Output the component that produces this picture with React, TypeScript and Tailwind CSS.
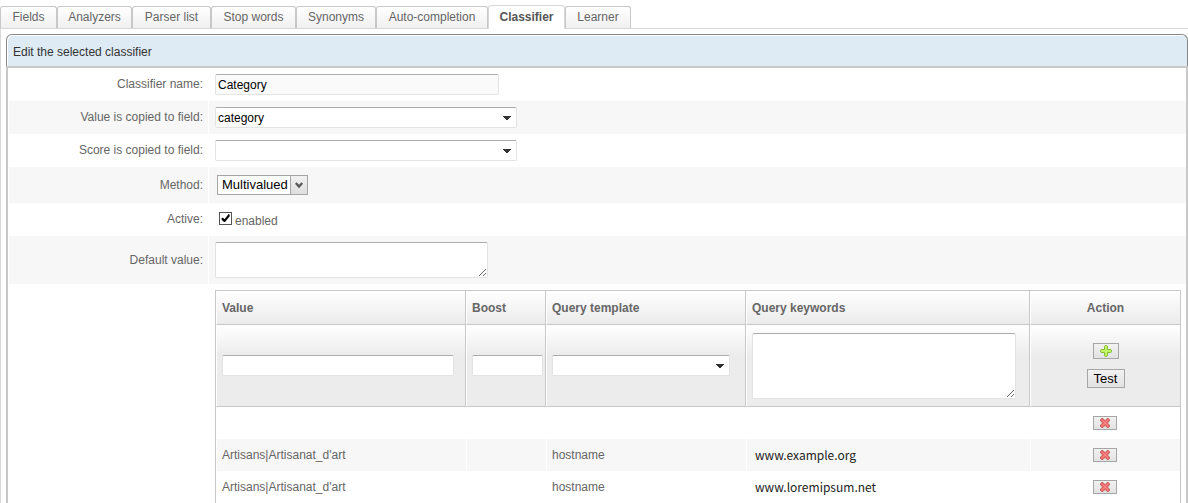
import type { ReactNode } from "react";

const tabs = [
  { name: "Fields", width: "w-[57px]" },
  { name: "Analyzers", width: "w-[75px]" },
  { name: "Parser list", width: "w-[79px]" },
  { name: "Stop words", width: "w-[85px]" },
  { name: "Synonyms", width: "w-20" },
  { name: "Auto-completion", width: "w-28" },
  { name: "Classifier", width: "w-[77px]" },
  { name: "Learner", width: "w-[66px]" },
];

const rules = [
  { id: 1, value: "", template: "", keywords: "" },
  { id: 2, value: "Artisans|Artisanat_d'art", template: "hostname", keywords: "www.example.org" },
  { id: 3, value: "Artisans|Artisanat_d'art", template: "hostname", keywords: "www.loremipsum.net" },
];

const field =
  "block rounded-[2px] border border-[#e3e3e3] border-t-[#acacac] px-[2px] text-xs text-black outline-none";

function Tab({ name, width }: { name: string; width: string }) {
  const active = name === "Classifier";
  return (
    <button
      role="tab"
      aria-selected={active}
      className={
        active
          ? `${width} -mb-px h-6 shrink-0 rounded-t-[3px] border border-b-0 border-[#d8d8d8] bg-white pb-[2px] text-center font-bold whitespace-nowrap text-[#555]`
          : `${width} h-[22px] shrink-0 rounded-t-[3px] border border-b-0 border-[#c8c8c8] bg-linear-to-b from-white to-[#f0f0f0] pb-px text-center whitespace-nowrap`
      }
    >
      {name}
    </button>
  );
}

function Combo({ id, label, width, options }: { id: string; label?: string; width: string; options: string[] }) {
  return (
    <div className={`relative ${width}`}>
      <select id={id} aria-label={label} className={`${field} h-[21px] w-full appearance-none bg-white`}>
        {options.map((o) => (
          <option key={o}>{o}</option>
        ))}
      </select>
      <svg className="pointer-events-none absolute top-[9px] right-[6px]" width="8" height="4" viewBox="0 0 8 4" shapeRendering="crispEdges">
        <path d="M0 0h8v1H0zM1 1h6v1H1zM2 2h4v1H2zM3 3h2v1H3z" fill="#333" />
      </svg>
    </div>
  );
}

function Row({ label, htmlFor, height, shaded, children }: {
  label?: string;
  htmlFor?: string;
  height: string;
  shaded?: boolean;
  children: ReactNode;
}) {
  const bg = shaded ? "bg-[#f7f7f7]" : "bg-white";
  return (
    <div className={`flex gap-px ${height}`}>
      <div className={`flex w-[199px] shrink-0 items-center justify-end pr-[5px] pb-px ${bg}`}>
        {label && <label htmlFor={htmlFor}>{label}</label>}
      </div>
      <div className={`flex min-w-0 flex-1 items-center pr-[5px] pl-[6px] ${bg}`}>{children}</div>
    </div>
  );
}

const iconButton =
  "inline-flex items-center justify-center border border-[#a6a6a6] bg-linear-to-b from-[#f2f2f2] to-[#e2e2e2]";

function AddIcon() {
  return (
    <svg width="12" height="12" viewBox="0 0 12 12">
      <path d="M4.5 1.2l.7-.7h1.6l.7.7v3.3h3.3l.7.7v1.6l-.7.7H7.5v3.3l-.7.7H5.2l-.7-.7V7.5H1.2l-.7-.7V5.2l.7-.7h3.3z" fill="#b4ee4c" stroke="#84bb33" />
      <path d="M6 1.5v9M1.5 6h9" fill="none" stroke="#c2f566" strokeWidth="2" />
    </svg>
  );
}

function DeleteIcon() {
  return (
    <svg width="10" height="10" viewBox="0 0 10 10">
      <path d="M1.6.5h1.2L5 2.7 7.2.5h1.2l1.1 1.1v1.2L7.3 5l2.2 2.2v1.2L8.4 9.5H7.2L5 7.3 2.8 9.5H1.6L.5 8.4V7.2L2.7 5 .5 2.8V1.6z" fill="#f0706d" stroke="#c05452" />
      <path d="M2 2l6 6M8 2L2 8" stroke="#f98682" />
    </svg>
  );
}

const head = "h-[34px] border-r border-b border-l border-r-[#c8c8c8] border-b-[#c8c8c8] border-l-white bg-linear-to-b from-white to-[#ebebeb] px-[5px] font-bold";
const filter = "h-[82px] border-r border-b border-l border-r-[#c8c8c8] border-b-[#c8c8c8] border-l-white bg-linear-to-b from-white to-[#ececec] to-[30px] px-[5px]";
const cell = "h-8 border-l border-white pl-[5px]";

function RuleTable() {
  return (
    <table className="w-full table-fixed border-separate border-spacing-0 border-t border-l border-[#c8c8c8]">
      <colgroup>
        <col className="w-[250px]" />
        <col className="w-20" />
        <col className="w-[200px]" />
        <col />
        <col className="w-[151px]" />
      </colgroup>
      <thead>
        <tr className="text-left">
          <th className={head}>Value</th>
          <th className={head}>Boost</th>
          <th className={head}>Query template</th>
          <th className={head}>Query keywords</th>
          <th className={`${head} text-center`}>Action</th>
        </tr>
        <tr>
          <td className={filter}>
            <input aria-label="Value" className={`${field} h-[21px] w-[232px] bg-white`} />
          </td>
          <td className={filter}>
            <input aria-label="Boost" className={`${field} h-[21px] w-[71px] bg-white`} />
          </td>
          <td className={filter}>
            <Combo id="query-template" label="Query template" width="w-[178px]" options={[""]} />
          </td>
          <td className={filter}>
            <textarea aria-label="Query keywords" className={`${field} h-[66px] w-[264px] resize bg-white`} />
          </td>
          <td className={filter}>
            <div className="flex flex-col items-center gap-[10px]">
              <button aria-label="Add" className={`${iconButton} h-4 w-[26px]`}>
                <AddIcon />
              </button>
              <button className={`${iconButton} h-[19px] w-[38px] text-[13px] text-black`}>Test</button>
            </div>
          </td>
        </tr>
      </thead>
      <tbody>
        {rules.map((r, i) => {
          const bg = i % 2 ? "bg-[#f7f7f7]" : "bg-white";
          return (
            <tr key={r.id}>
              <td className={`${cell} ${bg}`}>{r.value}</td>
              <td className={`${cell} ${bg}`} />
              <td className={`${cell} ${bg}`}>{r.template}</td>
              <td className={`${cell} ${bg}`}>
                <span className="pl-[3px] font-['Noto_Sans_CJK_SC',sans-serif] text-[#222]">{r.keywords}</span>
              </td>
              <td className={`${cell} ${bg} border-r border-r-[#c8c8c8] pr-[7px]`}>
                <div className="flex justify-center">
                  <button aria-label="Delete" className={`${iconButton} h-[14px] w-6`}>
                    <DeleteIcon />
                  </button>
                </div>
              </td>
            </tr>
          );
        })}
      </tbody>
    </table>
  );
}

export default function App() {
  return (
    <div className="min-w-[960px] bg-white font-['Liberation_Sans',Arial,sans-serif] text-xs leading-4 text-[#666]">
      <div role="tablist" className="flex h-[29px] items-end border-b border-[#d8d8d8]">
        {tabs.map((t) => (
          <Tab key={t.name} {...t} />
        ))}
      </div>
      <main className="border-l border-[#d8d8d8] pt-[5px] pl-[5px]">
        <h1 className="flex h-8 items-center rounded-t-[6px] border border-b-0 border-[#888] bg-[#dfebf4] px-[6px] pt-[2px] text-[#333] inset-shadow-[1px_1px_0_#fff]">
          Edit the selected classifier
        </h1>
        <form className="border-x-2 border-t-2 border-[#c8c8c8] pl-px" onSubmit={(e) => e.preventDefault()}>
          <Row label="Classifier name:" htmlFor="name" height="h-[33px]">
            <input id="name" readOnly defaultValue="Category" className={`${field} h-[21px] w-[284px] bg-[#fafafa]`} />
          </Row>
          <Row label="Value is copied to field:" htmlFor="value-field" height="h-[33px]" shaded>
            <Combo id="value-field" width="w-[302px]" options={["category"]} />
          </Row>
          <Row label="Score is copied to field:" htmlFor="score-field" height="h-[33px]">
            <Combo id="score-field" width="w-[302px]" options={[""]} />
          </Row>
          <Row label="Method:" htmlFor="method" height="h-9" shaded>
            <div className="relative ml-[2px] w-[91px]">
              <select id="method" className="block h-5 w-full appearance-none border border-[#a6a6a6] bg-white pl-1 text-[13px] text-black">
                <option>Multivalued</option>
              </select>
              <span className="pointer-events-none absolute inset-y-0 right-0 flex w-[18px] items-center justify-center border border-[#a6a6a6] bg-linear-to-b from-[#f2f2f2] to-[#dedede]">
                <svg width="8" height="7" viewBox="0 0 8 7">
                  <path d="M.8 1L4 4.6 7.2 1" fill="none" stroke="#555" strokeWidth="2.2" />
                </svg>
              </span>
            </div>
          </Row>
          <Row label="Active:" htmlFor="active" height="h-[33px]">
            <div className="flex items-center gap-[3px] pb-[2px] pl-1">
              <span className="relative block size-[13px]">
                <input id="active" type="checkbox" defaultChecked className="peer block size-[13px] appearance-none border border-[#555] bg-white" />
                <svg className="pointer-events-none absolute inset-0 hidden peer-checked:block" width="13" height="13" viewBox="0 0 13 13">
                  <path d="M2.5 6.5l1.2-1 1.8 1.7L9.7 2l1 .8v1.4L6 10H5L2.5 7.6z" fill="#000" />
                </svg>
              </span>
              <label htmlFor="active" className="pt-1">enabled</label>
            </div>
          </Row>
          <Row label="Default value:" htmlFor="default" height="h-12" shaded>
            <textarea id="default" className={`${field} h-9 w-[273px] resize bg-white`} />
          </Row>
          <Row height="pt-0">
            <div className="min-w-0 flex-1 pt-[6px]">
              <RuleTable />
            </div>
          </Row>
        </form>
      </main>
    </div>
  );
}
